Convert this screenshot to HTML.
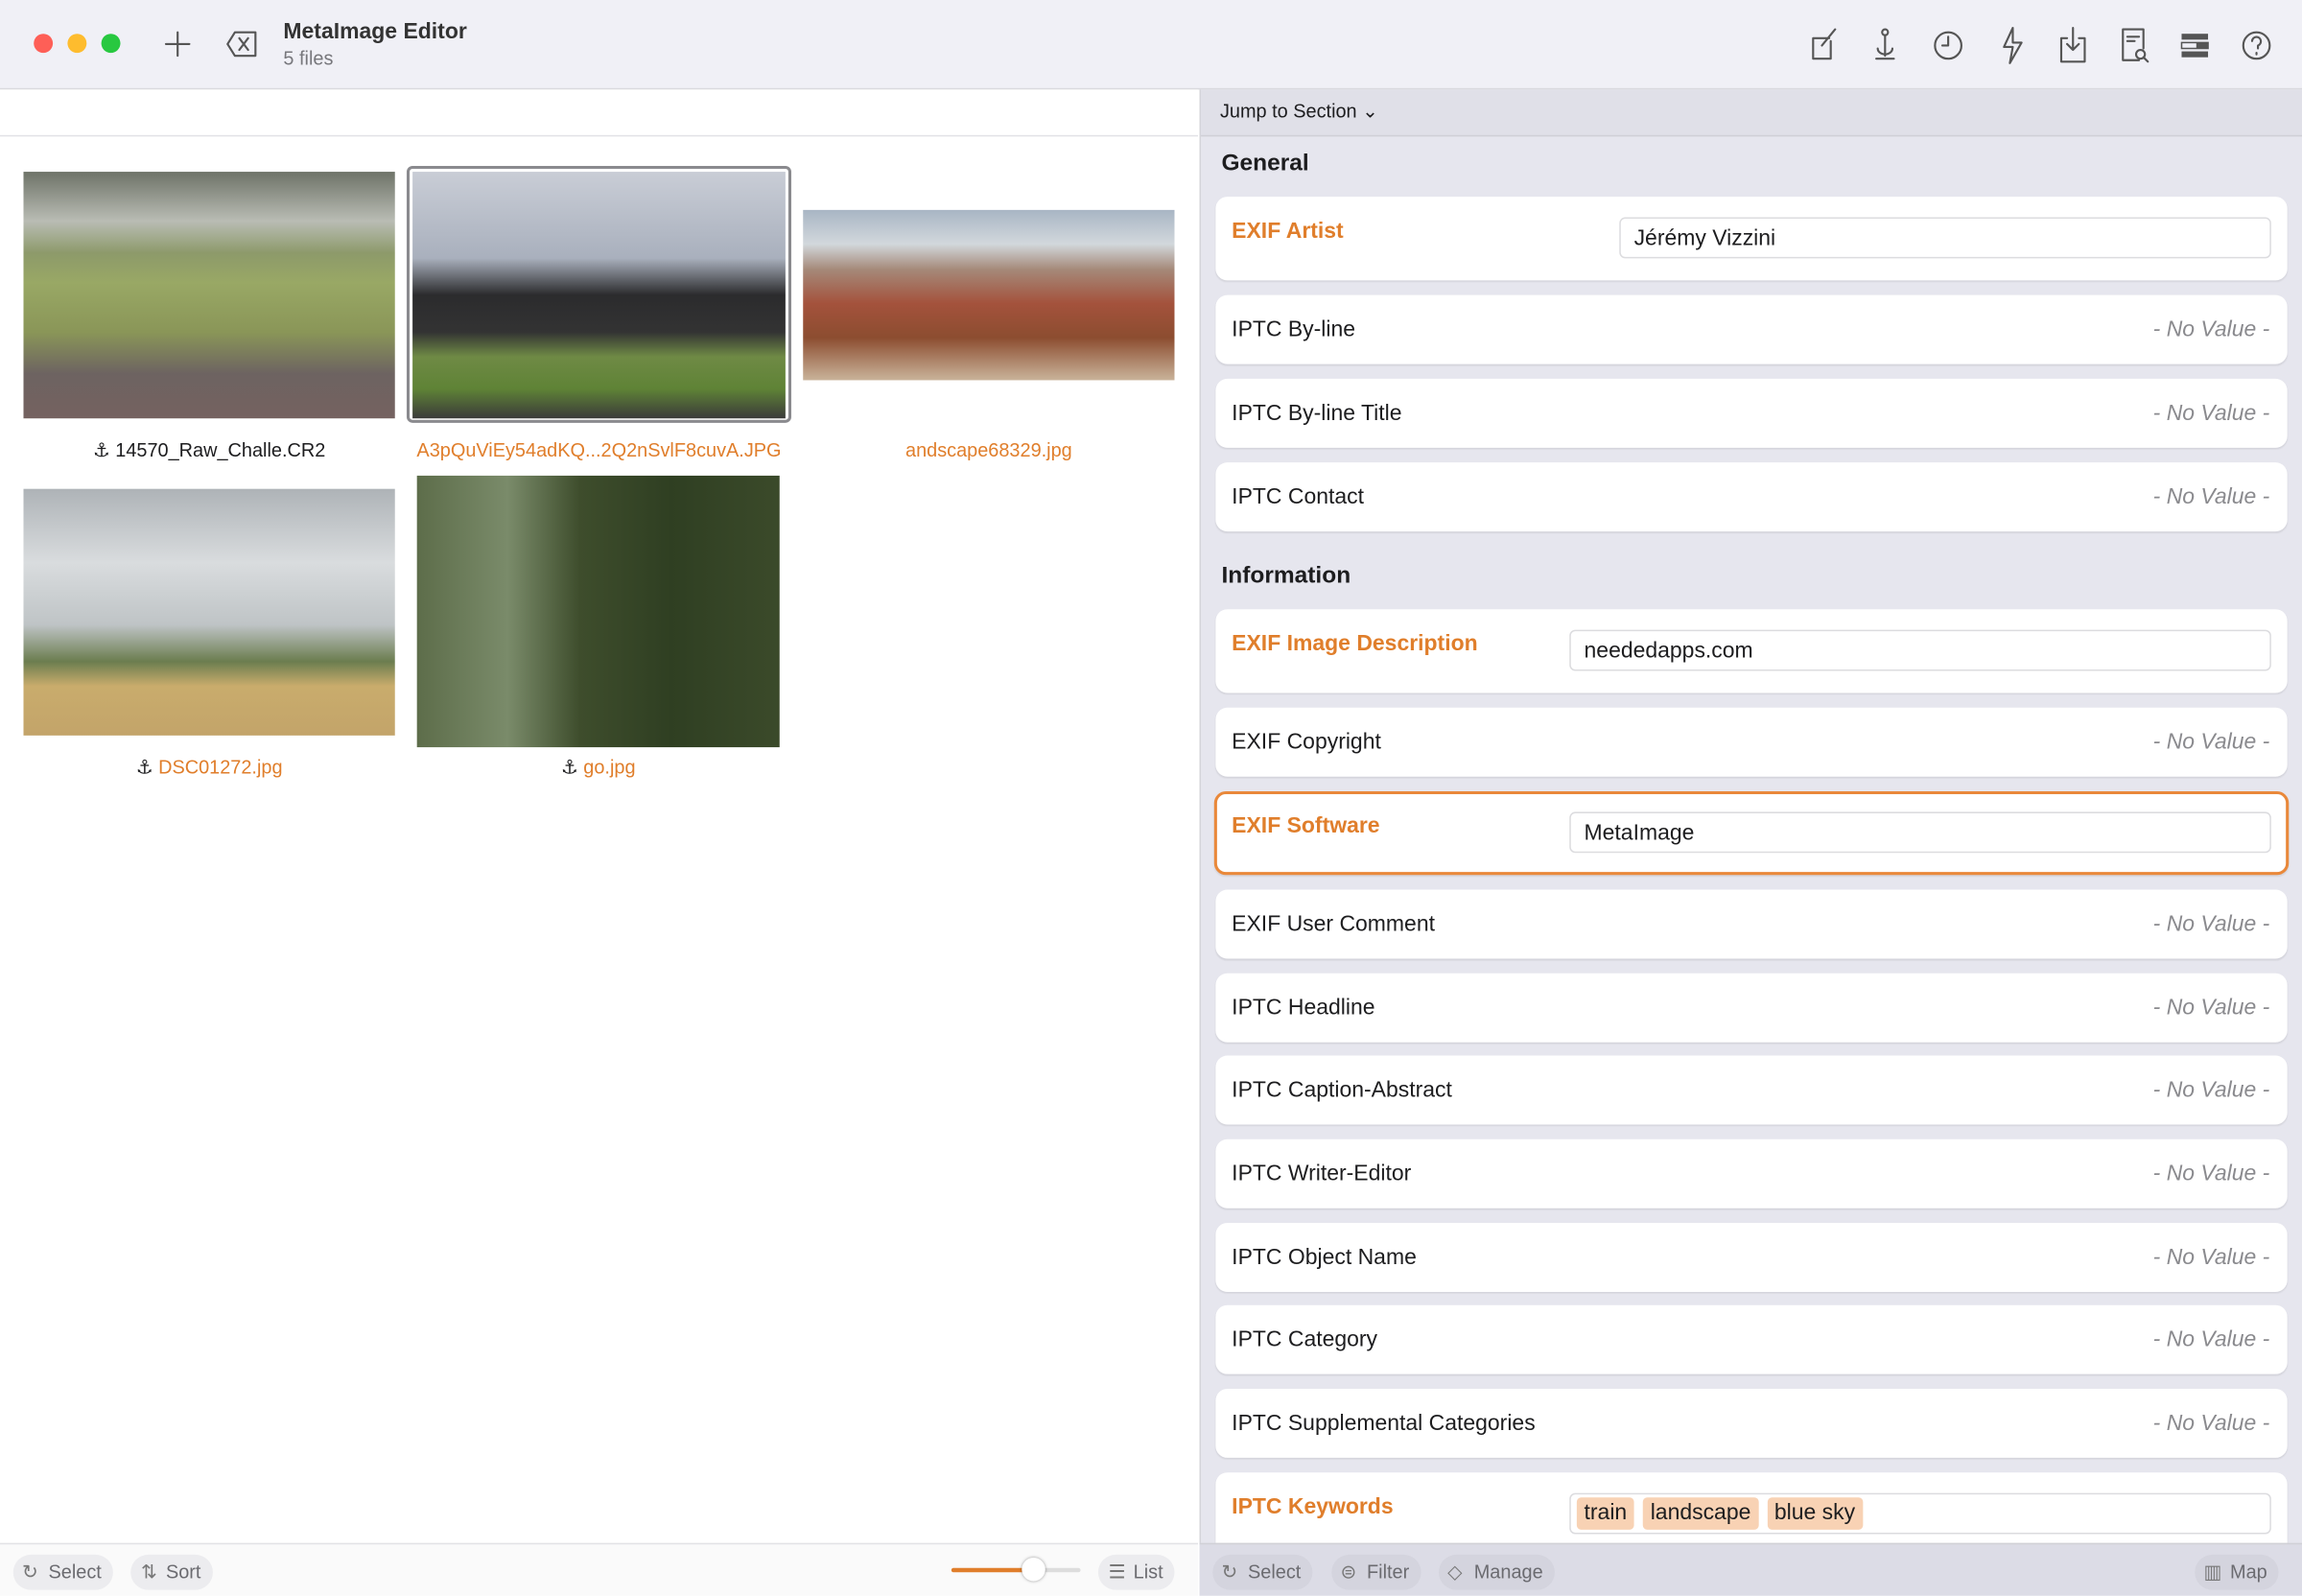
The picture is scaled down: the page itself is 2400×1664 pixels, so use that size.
<!DOCTYPE html>
<html><head><meta charset="utf-8">
<style>
html,body{margin:0;padding:0;width:2400px;height:1663px;overflow:hidden;background:#fff}
#w{position:absolute;left:0;top:0;width:1568px;height:1087px;transform:scale(1.530613);transform-origin:0 0;font-family:"Liberation Sans",sans-serif;color:#1d1d1f;overflow:hidden}
.abs{position:absolute}
.title{left:0;top:0;width:1568px;height:60px;background:#f0f0f6;border-bottom:1px solid #d9d9de}
.dot{width:13px;height:13px;border-radius:50%;top:23px}
.ic{stroke:#555;fill:none;stroke-width:1.4;stroke-linecap:round;stroke-linejoin:round}
.left{left:0;top:61px;width:816px;height:990px;background:#fff}
.right{left:817px;top:61px;width:751px;height:990px;background:#e6e6ee;border-left:1px solid #d4d4da}
.img{position:absolute}
.cap{position:absolute;font-size:13px;text-align:center;color:#1d1d1f}
.or{color:#e07e2b}
.lab.or{font-weight:bold}
.card{position:absolute;left:10px;width:730px;background:#fff;border-radius:8px;box-shadow:0 1px 1px rgba(0,0,0,.08)}
.lab{position:absolute;left:11px;font-size:15px}
.nv{position:absolute;right:12px;font-size:15px;font-style:italic;color:#8a8a8e}
.inp{position:absolute;right:11px;height:28px;border:1px solid #dcdcdf;border-radius:4px;background:#fff;font-size:15px;line-height:28px;padding-left:9px;box-sizing:border-box}
.h{position:absolute;left:14px;font-size:16px;font-weight:bold}
.bb{position:absolute;top:1051px;height:36px}
.btn{position:absolute;top:7px;height:24px;border-radius:12px;background:#ececef;font-size:13px;color:#6b6b70;line-height:24px;padding:0 8px 0 24px;box-sizing:border-box}
.rb .btn{background:#d4d4de}
.tag{display:inline-block;background:#f8d2b4;padding:0 5px;margin-right:6px;line-height:22px;border-radius:3px}
</style></head><body>
<div id="w">
<div class="abs title">
 <div class="abs dot" style="left:23px;background:#fe5f57"></div>
 <div class="abs dot" style="left:46px;background:#febc2e"></div>
 <div class="abs dot" style="left:69px;background:#28c840"></div>
 <svg class="abs" style="left:111px;top:20px" width="20" height="20"><path class="ic" d="M10 2v16M2 10h16"/></svg>
 <svg class="abs" style="left:153px;top:19px" width="24" height="22"><path class="ic" d="M7 3h14v16H7L2 11z M10 7l6 8M16 7l-6 8"/></svg>
 <div class="abs" style="left:193px;top:13px;font-size:15px;font-weight:bold;color:#333">MetaImage Editor</div>
 <div class="abs" style="left:193px;top:32px;font-size:13px;color:#77777c">5 files</div>
 <svg class="abs" style="left:1230px;top:18px" width="330" height="26">
  <g class="ic" transform="translate(2,2)"><path d="M15 8v12H3V6h11M18 0l-9 11"/></g>
  <g class="ic" transform="translate(45,1)"><circle cx="9" cy="3" r="2"/><path d="M9 5v14M4 14a5 4 0 1 0 10 0M3 21h12"/></g>
  <g class="ic" transform="translate(88,2)"><circle cx="9" cy="11" r="9"/><path d="M9 5v6H5"/></g>
  <g class="ic" transform="translate(132,1)"><path d="M9 0L3 13h6l-2 11 8-14H9z"/></g>
  <g class="ic" transform="translate(172,1)"><path d="M6 7H2v16h16V7h-4M10 0v15M6 11l4 4 4-4"/></g>
  <g class="ic" transform="translate(214,1)"><path d="M16 14V1H2v21h11M5 6h8M5 9h5"/><circle cx="14" cy="18" r="3"/><path d="M16 20l3 3"/></g>
  <g transform="translate(256,5)" fill="#555"><rect x="0" y="0" width="18" height="4"/><rect x="0" y="6" width="18" height="4" fill="none" stroke="#555"/><rect x="0" y="12" width="18" height="4"/><rect x="10" y="6" width="8" height="4"/></g>
  <g class="ic" transform="translate(298,2)"><circle cx="9" cy="11" r="9"/><path d="M6 8a3 3 0 1 1 4 3v2M9 16v1"/></g>
 </svg>
</div>

<div class="abs left">
 <div class="abs" style="left:0;top:31px;width:816px;height:1px;background:#e2e2e6"></div>
 <div class="img" style="left:16px;top:56px;width:253px;height:168px;background:linear-gradient(180deg,#6e7368 0%,#b9bcb4 20%,#8d9a6a 33%,#99a865 45%,#8a9658 65%,#6d6361 82%,#756260 100%)"></div>
 <div class="img" style="left:277px;top:52px;width:258px;height:171px;border:2px solid #8a8a8e;border-radius:4px"></div>
 <div class="img" style="left:281px;top:56px;width:254px;height:168px;background:linear-gradient(180deg,#c9cdd6 0%,#a9b0bd 35%,#2b2b2d 50%,#333 65%,#6f8a45 75%,#5f8336 88%,#3b3b3a 100%)"></div>
 <div class="img" style="left:547px;top:82px;width:253px;height:116px;background:linear-gradient(180deg,#a8b5c4 0%,#d2d8dc 20%,#a58979 35%,#a4523c 55%,#8c4d30 75%,#c9b39a 100%)"></div>
 <div class="cap" style="left:16px;top:238px;width:253px">⚓︎ 14570_Raw_Challe.CR2</div>
 <div class="cap or" style="left:276px;top:238px;width:264px">A3pQuViEy54adKQ...2Q2nSvlF8cuvA.JPG</div>
 <div class="cap or" style="left:547px;top:238px;width:253px">andscape68329.jpg</div>
 <div class="img" style="left:16px;top:272px;width:253px;height:168px;background:linear-gradient(180deg,#aeb3b7 0%,#d9dcde 30%,#bfc4c6 55%,#6b7d4f 70%,#c9ac6c 80%,#c3a46a 100%)"></div>
 <div class="img" style="left:284px;top:263px;width:247px;height:185px;background:linear-gradient(90deg,#5d6d4a 0%,#7a8b6a 25%,#3e4d2c 45%,#2f3f22 70%,#3b4a2a 100%)"></div>
 <div class="cap" style="left:16px;top:454px;width:253px">⚓︎ <span class="or">DSC01272.jpg</span></div>
 <div class="cap" style="left:284px;top:454px;width:247px">⚓︎ <span class="or">go.jpg</span></div>
</div>

<div class="abs right">
 <div class="abs" style="left:0;top:0;width:751px;height:31px;background:#e0e0e8;border-bottom:1px solid #d0d0d6"></div>
 <div class="abs" style="left:13px;top:7px;font-size:13px">Jump to Section ⌄</div>
 <div class="h" style="top:42px">General</div>
 <div class="card" style="top:73px;height:57px"><div class="lab or" style="top:15px">EXIF Artist</div><div class="inp" style="top:14px;width:444px">Jérémy Vizzini</div></div>
 <div class="card" style="top:140px;height:47px"><div class="lab" style="top:15px">IPTC By-line</div><div class="nv" style="top:15px">- No Value -</div></div>
 <div class="card" style="top:197px;height:47px"><div class="lab" style="top:15px">IPTC By-line Title</div><div class="nv" style="top:15px">- No Value -</div></div>
 <div class="card" style="top:254px;height:47px"><div class="lab" style="top:15px">IPTC Contact</div><div class="nv" style="top:15px">- No Value -</div></div>
 <div class="h" style="top:323px">Information</div>
 <div class="card" style="top:354px;height:57px"><div class="lab or" style="top:15px">EXIF Image Description</div><div class="inp" style="top:14px;width:478px">neededapps.com</div></div>
 <div class="card" style="top:421px;height:47px"><div class="lab" style="top:15px">EXIF Copyright</div><div class="nv" style="top:15px">- No Value -</div></div>
 <div class="card" style="top:478px;height:57px;border:2px solid #e9883a;box-sizing:border-box;left:9px;width:732px"><div class="lab or" style="top:13px;left:10px">EXIF Software</div><div class="inp" style="top:12px;width:478px;right:10px">MetaImage</div></div>
 <div class="card" style="top:545px;height:47px"><div class="lab" style="top:15px">EXIF User Comment</div><div class="nv" style="top:15px">- No Value -</div></div>
 <div class="card" style="top:602px;height:47px"><div class="lab" style="top:15px">IPTC Headline</div><div class="nv" style="top:15px">- No Value -</div></div>
 <div class="card" style="top:658px;height:47px"><div class="lab" style="top:15px">IPTC Caption-Abstract</div><div class="nv" style="top:15px">- No Value -</div></div>
 <div class="card" style="top:715px;height:47px"><div class="lab" style="top:15px">IPTC Writer-Editor</div><div class="nv" style="top:15px">- No Value -</div></div>
 <div class="card" style="top:772px;height:47px"><div class="lab" style="top:15px">IPTC Object Name</div><div class="nv" style="top:15px">- No Value -</div></div>
 <div class="card" style="top:828px;height:47px"><div class="lab" style="top:15px">IPTC Category</div><div class="nv" style="top:15px">- No Value -</div></div>
 <div class="card" style="top:885px;height:47px"><div class="lab" style="top:15px">IPTC Supplemental Categories</div><div class="nv" style="top:15px">- No Value -</div></div>
 <div class="card" style="top:942px;height:60px"><div class="lab or" style="top:15px">IPTC Keywords</div><div class="inp" style="top:14px;width:478px;padding-left:4px;line-height:26px"><span class="tag">train</span><span class="tag">landscape</span><span class="tag">blue sky</span></div></div>
</div>

<div class="bb" style="left:0;width:816px;background:#fafafa;border-top:1px solid #e2e2e6">
 <div class="btn" style="left:9px;background:#ececef">Select</div>
 <div class="abs" style="left:15px;top:11px;font-size:13px;color:#777">↻</div>
 <div class="btn" style="left:89px">Sort</div>
 <div class="abs" style="left:96px;top:11px;font-size:13px;color:#777">⇅</div>
 <div class="abs" style="left:648px;top:16px;width:56px;height:3px;background:#e07e2b;border-radius:2px"></div>
 <div class="abs" style="left:704px;top:16px;width:32px;height:3px;background:#ddd;border-radius:2px"></div>
 <div class="abs" style="left:696px;top:9px;width:16px;height:16px;border-radius:50%;background:#fff;box-shadow:0 0 2px rgba(0,0,0,.4)"></div>
 <div class="btn" style="left:748px">List</div>
 <div class="abs" style="left:755px;top:11px;font-size:13px;color:#777">☰</div>
</div>
<div class="bb rb" style="left:817px;width:751px;background:#dcdce6;border-top:1px solid #d0d0d6">
 <div class="btn" style="left:9px">Select</div>
 <div class="abs" style="left:15px;top:11px;font-size:13px;color:#777">↻</div>
 <div class="btn" style="left:90px">Filter</div>
 <div class="abs" style="left:96px;top:11px;font-size:13px;color:#777">⊜</div>
 <div class="btn" style="left:163px">Manage</div>
 <div class="abs" style="left:169px;top:11px;font-size:13px;color:#777">◇</div>
 <div class="btn" style="left:678px">Map</div>
 <div class="abs" style="left:684px;top:11px;font-size:13px;color:#777">▥</div>
</div>
</div>
</body></html>
